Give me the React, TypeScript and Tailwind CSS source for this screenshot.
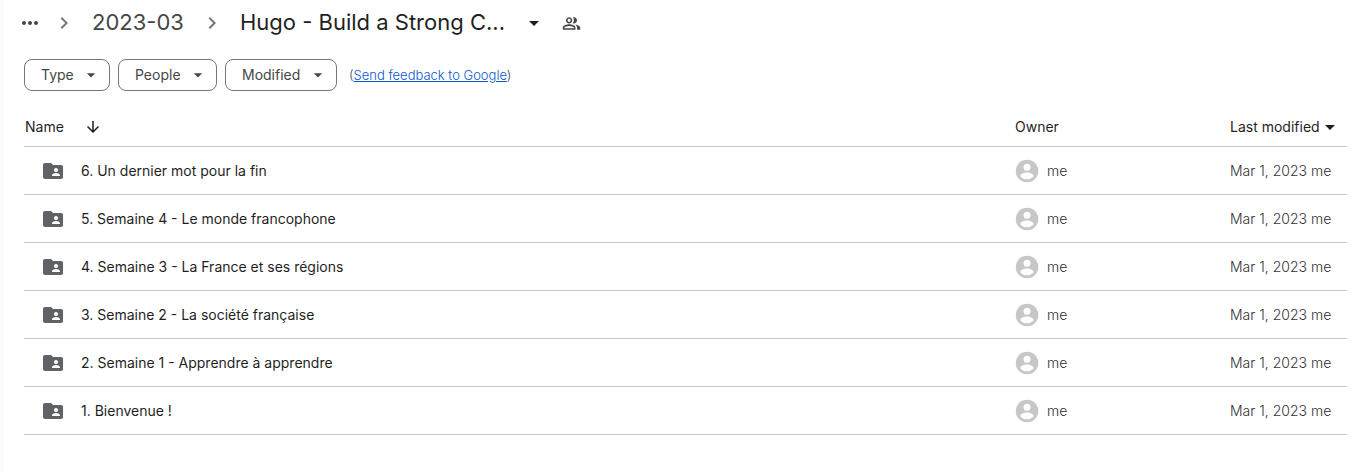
import React from "react";

const folders = [
  "6. Un dernier mot pour la fin",
  "5. Semaine 4 - Le monde francophone",
  "4. Semaine 3 - La France et ses régions",
  "3. Semaine 2 - La société française",
  "2. Semaine 1 - Apprendre à apprendre",
  "1. Bienvenue !",
];

const filters = [
  { label: "Type", width: "w-[86px]" },
  { label: "People", width: "w-[99px]" },
  { label: "Modified", width: "w-[112px]" },
];

function Icon({ d, className }: { d: string; className: string }) {
  return (
    <svg viewBox="0 0 24 24" fill="currentColor" aria-hidden="true" className={`shrink-0 ${className}`}>
      <path fillRule="evenodd" d={d} />
    </svg>
  );
}

function Avatar() {
  return (
    <svg viewBox="0 0 24 24" aria-hidden="true" className="size-6 shrink-0">
      <circle cx="12" cy="12" r="11.3" fill="#c7c7c7" />
      <circle cx="12" cy="8.2" r="3.5" fill="white" />
      <path d="M5.300 17.200c0-2.200 4-3.600 6.700-3.600s6.700 1.400 6.700 3.600c-1.500 1.900-3.900 3.100-6.700 3.100s-5.200-1.200-6.700-3.100z" fill="white" />
    </svg>
  );
}

const CHEVRON = "M10 6 8.59 7.41 13.17 12l-4.58 4.59L10 18l6-6z";
const CARET = "M7 10l5 5 5-5z";
const MORE =
  "M6 10c-1.1 0-2 .9-2 2s.9 2 2 2 2-.9 2-2-.9-2-2-2zm12 0c-1.1 0-2 .9-2 2s.9 2 2 2 2-.9 2-2-.9-2-2-2zm-6 0c-1.1 0-2 .9-2 2s.9 2 2 2 2-.9 2-2-.9-2-2-2z";
const ARROW_DOWN = "M20 12l-1.41-1.41L13 16.17V4h-2v12.17l-5.58-5.59L4 12l8 8 8-8z";
const FOLDER_SHARED =
  "M20 6h-8l-2-2H4c-1.1 0-1.99.9-1.99 2L2 18c0 1.1.9 2 2 2h16c1.1 0 2-.9 2-2V8c0-1.1-.9-2-2-2zm-5 3c1.1 0 2 .9 2 2s-.9 2-2 2-2-.9-2-2 .9-2 2-2zm4 8h-8v-1c0-1.33 2.67-2 4-2s4 .67 4 2v1z";
const PEOPLE =
  "M9 12c2.21 0 4-1.79 4-4s-1.79-4-4-4-4 1.79-4 4 1.79 4 4 4zm0-6c1.1 0 2 .9 2 2s-.9 2-2 2-2-.9-2-2 .9-2 2-2zM15 12c2.21 0 4-1.79 4-4s-1.79-4-4-4c-.47 0-.91.1-1.33.24C14.5 5.27 15 6.58 15 8s-.5 2.730-1.330 3.760c.42.14.86.24 1.330.24zM9 13c-2.670 0-8 1.340-8 4v3h16v-3c0-2.660-5.330-4-8-4zm6 5H3v-.99C3.200 16.290 6.300 15 9 15s5.800 1.290 6 2v1zM16.670 13.130C18.040 14.060 19 15.320 19 17v3h4v-3c0-2.180-3.580-3.470-6.330-3.870z";

function Breadcrumbs() {
  return (
    <nav aria-label="Breadcrumb" className="flex h-[46px] items-center">
      <button aria-label="Show path" className="ml-3.5 text-[#444746]">
        <Icon d={MORE} className="size-6" />
      </button>
      <Icon d={CHEVRON} className="ml-2.5 size-6 text-[#747775]" />
      <a href="#2023-03" className="ml-4 w-[92px] text-[22px] whitespace-nowrap text-[#444746]">
        2023-03
      </a>
      <Icon d={CHEVRON} className="ml-4 size-6 text-[#747775]" />
      <button className="ml-4 flex items-center text-[22px] whitespace-nowrap text-[#1f1f1f]">
        <span className="w-[270px] text-left">Hugo - Build a Strong C...</span>
        <Icon d={CARET} className="ml-3 size-6" />
      </button>
      <button aria-label="Manage access" className="ml-4 text-[#444746]">
        <Icon d={PEOPLE} className="size-[19px]" />
      </button>
    </nav>
  );
}

function Filters() {
  return (
    <div className="ml-5 flex h-8 items-center gap-2">
      {filters.map((f) => (
        <button
          key={f.label}
          className={`flex h-8 items-center justify-between rounded-lg border border-[#747775] pr-2 pl-4 text-[#444746] ${f.width}`}
        >
          {f.label}
          <Icon d={CARET} className="size-5" />
        </button>
      ))}
      <span className="ml-1 text-[13px] font-light text-[#444746]">
        (
        <a href="#feedback" className="text-[#0b57d0] underline">
          Send feedback to Google
        </a>
        )
      </span>
    </div>
  );
}

export default function App() {
  return (
    <div className="min-h-screen bg-[#f8fafd] pl-1 font-[Inter,'Liberation_Sans',sans-serif] text-sm text-[#1f1f1f]">
      <main className="min-h-screen bg-white">
        <div className="pb-[13px]">
          <Breadcrumbs />
        </div>
        <Filters />
        <div className="pt-4 pl-5">
          <table className="w-full table-fixed border-separate border-spacing-0 text-left [&_td]:border-b [&_td]:border-[#c7c7c7] [&_td]:p-0 [&_th]:border-b [&_th]:border-[#c7c7c7] [&_th]:p-0 [&_th]:font-normal">
            <thead>
              <tr className="h-10">
                <th scope="col">
                  <button className="flex items-center gap-5 pl-px">
                    Name
                    <Icon d={ARROW_DOWN} className="size-[18px]" />
                  </button>
                </th>
                <th scope="col" className="w-[215px]">
                  Owner
                </th>
                <th scope="col" className="w-[117px] whitespace-nowrap">
                  <button className="flex items-center">
                    Last modified
                    <Icon d={CARET} className="-ml-0.5 size-6" />
                  </button>
                </th>
              </tr>
            </thead>
            <tbody>
              {folders.map((name) => (
                <tr key={name} className="h-12">
                  <td>
                    <a href="#folder" className="flex items-center gap-4 pl-[17px]">
                      <Icon d={FOLDER_SHARED} className="size-6 text-[#5f6368]" />
                      {name}
                    </a>
                  </td>
                  <td className="font-light text-[#303336]">
                    <span className="flex items-center gap-2">
                      <Avatar />
                      me
                    </span>
                  </td>
                  <td className="font-light whitespace-nowrap text-[#303336]">Mar 1, 2023 me</td>
                </tr>
              ))}
            </tbody>
          </table>
        </div>
      </main>
    </div>
  );
}
